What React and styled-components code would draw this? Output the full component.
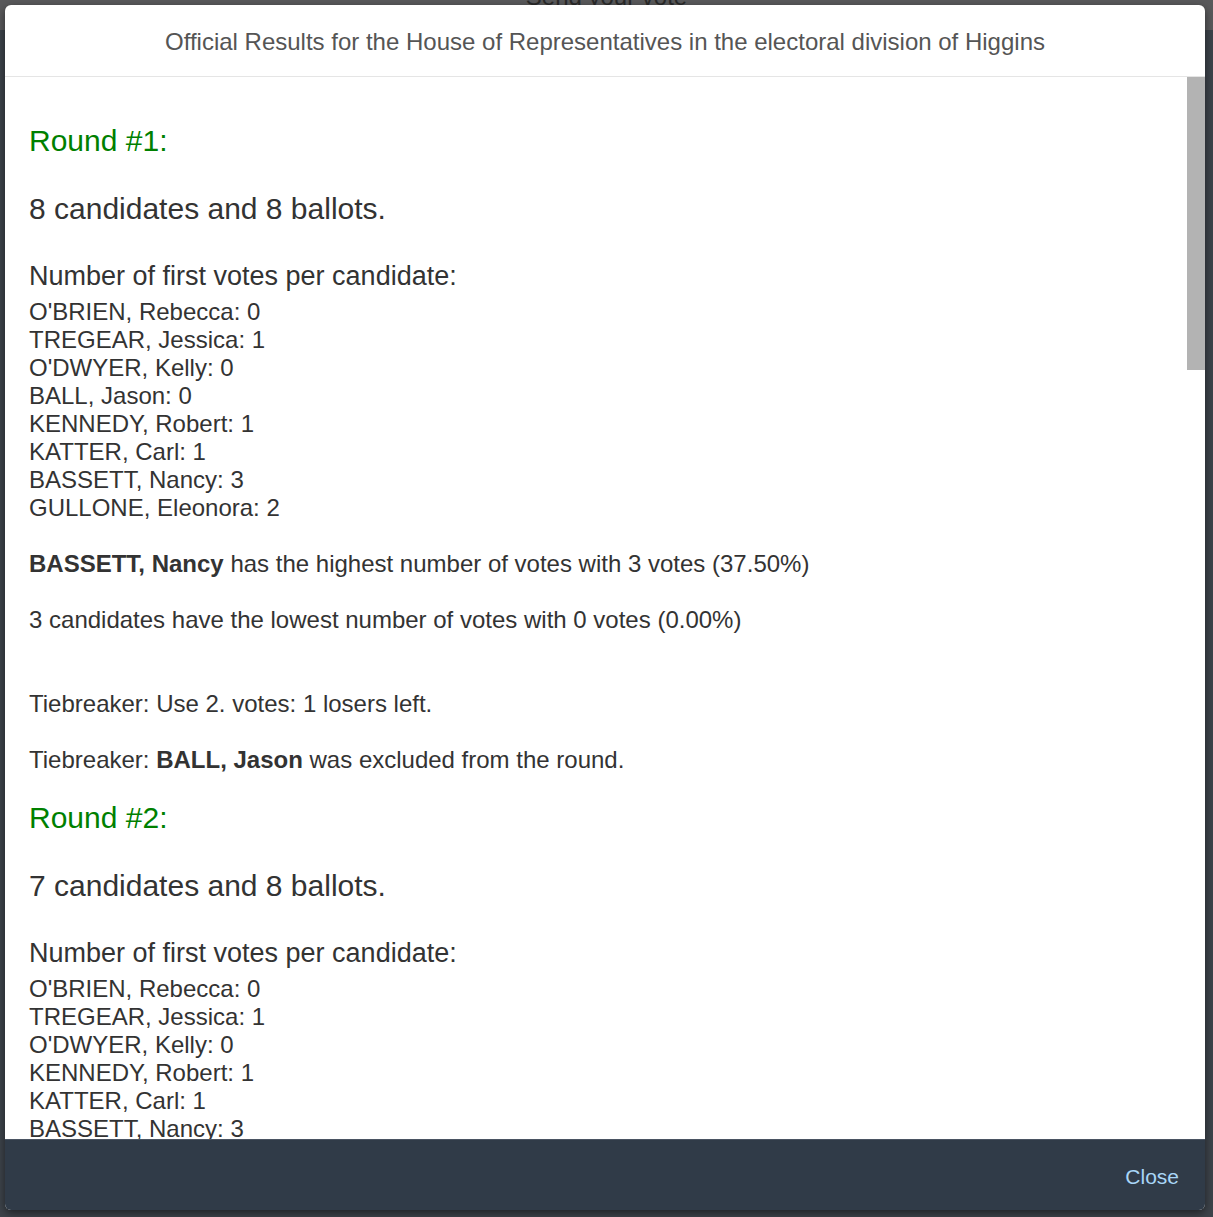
import React from "react";
import styled, { createGlobalStyle } from "styled-components";

const GlobalStyle = createGlobalStyle`
  *, *::before, *::after {
    box-sizing: border-box;
  }
  html, body {
    margin: 0;
    padding: 0;
    height: 100%;
    overflow: hidden;
  }
  body {
    font-family: "Liberation Sans", Arial, Helvetica, sans-serif;
    background: #3d434a;
  }
`;

const Page = styled.div`
  position: relative;
  width: 1213px;
  height: 1217px;
  display: flex;
  flex-direction: column;
  background: #3d434a;
  overflow: hidden;
`;

const TopStrip = styled.div`
  height: 30px;
  background: #59595b;
  display: flex;
  justify-content: center;
  align-items: flex-start;
`;

const BehindTitle = styled.div`
  margin-top: -17px;
  font-size: 24px;
  line-height: 28px;
  color: #2a2a2a;
`;

const Modal = styled.div`
  position: absolute;
  top: 5px;
  left: 5px;
  width: 1200px;
  height: 1205px;
  display: flex;
  flex-direction: column;
  background: #fff;
  border-radius: 6px;
  overflow: hidden;
  box-shadow: 0 3px 9px rgba(0, 0, 0, 0.5);
`;

const Header = styled.div`
  flex: none;
  height: 72px;
  padding: 16px 20px 14px;
  line-height: 41px;
  font-size: 24px;
  color: #555;
  text-align: center;
  border-bottom: 1px solid #e5e5e5;
`;

const BodyRow = styled.div`
  flex: 1;
  min-height: 0;
  display: flex;
`;

const Body = styled.div`
  flex: 1;
  overflow: hidden;
  padding: 48px 24px 0;
  color: #333;
`;

const ScrollTrack = styled.div`
  flex: none;
  width: 18px;
  background: #fff;
`;

const ScrollThumb = styled.div`
  height: 293px;
  background: #b3b3b3;
`;

const Round = styled.section`
  display: flex;
  flex-direction: column;
`;

const RoundTitle = styled.div`
  font-size: 30px;
  line-height: 32px;
  color: #008000;
  margin-bottom: 34px;
`;

const Summary = styled.div`
  font-size: 30px;
  line-height: 36px;
  margin-bottom: 33px;
`;

const SubTitle = styled.div`
  font-size: 27px;
  line-height: 32px;
  margin-bottom: 6px;
`;

const List = styled.div`
  display: flex;
  flex-direction: column;
  margin-bottom: 28px;
`;

const Line = styled.div`
  font-size: 24px;
  line-height: 28px;
  margin-bottom: ${({ gap }) => (gap ? gap : 0)}px;
`;

const Footer = styled.div`
  flex: none;
  height: 71px;
  display: flex;
  justify-content: flex-end;
  align-items: center;
  padding: 3px 26px 0;
  background: #303b48;
  border-top: 1px solid #4a5462;
`;

const CloseButton = styled.button`
  border: none;
  background: none;
  padding: 0;
  font-family: inherit;
  font-size: 21px;
  color: #a9d6f7;
  cursor: pointer;
`;

const rounds = [
  {
    candidates: 8,
    votes: [
      ["O'BRIEN, Rebecca", 0],
      ["TREGEAR, Jessica", 1],
      ["O'DWYER, Kelly", 0],
      ["BALL, Jason", 0],
      ["KENNEDY, Robert", 1],
      ["KATTER, Carl", 1],
      ["BASSETT, Nancy", 3],
      ["GULLONE, Eleonora", 2],
    ],
    high: ["BASSETT, Nancy", 3, "37.50"],
    low: [3, 0, "0.00"],
    excluded: "BALL, Jason",
  },
  {
    candidates: 7,
    votes: [
      ["O'BRIEN, Rebecca", 0],
      ["TREGEAR, Jessica", 1],
      ["O'DWYER, Kelly", 0],
      ["KENNEDY, Robert", 1],
      ["KATTER, Carl", 1],
      ["BASSETT, Nancy", 3],
      ["GULLONE, Eleonora", 2],
    ],
    high: ["BASSETT, Nancy", 3, "37.50"],
    low: [2, 0, "0.00"],
    excluded: "O'DWYER, Kelly",
  },
];

const RoundBlock = ({ index, round }) => (
  <Round>
    <RoundTitle>Round #{index + 1}:</RoundTitle>
    <Summary>{round.candidates} candidates and 8 ballots.</Summary>
    <SubTitle>Number of first votes per candidate:</SubTitle>
    <List>
      {round.votes.map(([name, count]) => (
        <Line key={name}>
          {name}: {count}
        </Line>
      ))}
    </List>
    <Line gap={28}>
      <b>{round.high[0]}</b> has the highest number of votes with {round.high[1]} votes ({round.high[2]}%)
    </Line>
    <Line gap={56}>
      {round.low[0]} candidates have the lowest number of votes with {round.low[1]} votes ({round.low[2]}%)
    </Line>
    <Line gap={28}>Tiebreaker: Use 2. votes: 1 losers left.</Line>
    <Line gap={28}>
      Tiebreaker: <b>{round.excluded}</b> was excluded from the round.
    </Line>
  </Round>
);

export default function App() {
  return (
    <>
      <GlobalStyle />
      <Page>
        <TopStrip>
          <BehindTitle>Send your vote</BehindTitle>
        </TopStrip>
        <Modal>
          <Header>Official Results for the House of Representatives in the electoral division of Higgins</Header>
          <BodyRow>
            <Body>
              {rounds.map((round, i) => (
                <RoundBlock key={i} index={i} round={round} />
              ))}
            </Body>
            <ScrollTrack>
              <ScrollThumb />
            </ScrollTrack>
          </BodyRow>
          <Footer>
            <CloseButton>Close</CloseButton>
          </Footer>
        </Modal>
      </Page>
    </>
  );
}
